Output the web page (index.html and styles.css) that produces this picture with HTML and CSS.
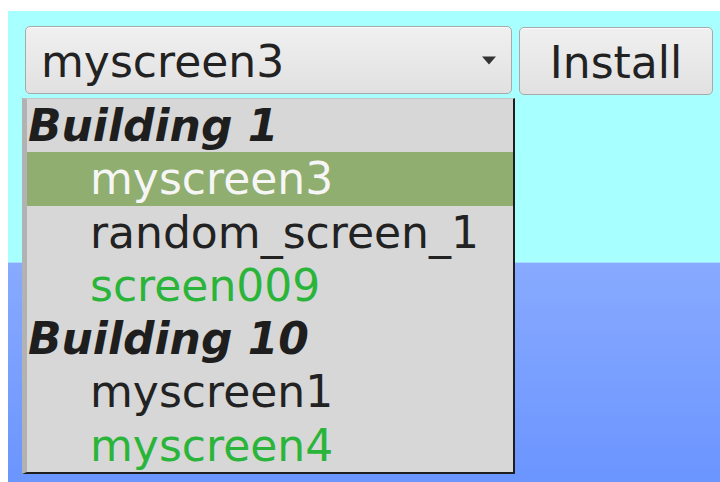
FILE: index.html
```html
<!DOCTYPE html>
<html lang="en">
<head>
<meta charset="utf-8">
<title>Screen installer</title>
<link rel="stylesheet" href="styles.css">
</head>
<body>
<div class="stage">
  <div class="top">
    <div class="toolbar">
      <div class="combo">
        <span class="combo-value">myscreen3</span>
        <svg class="arrow" width="16" height="9" viewBox="0 0 16 9"><path d="M1 0.5h14L8 8.5z" fill="#333"/></svg>
      </div>
      <button class="btn">Install</button>
    </div>
  </div>
  <div class="bottom"></div>

  <ul class="popup">
    <li class="group">Building 1</li>
    <li class="item selected">myscreen3</li>
    <li class="item">random_screen_1</li>
    <li class="item online">screen009</li>
    <li class="group">Building 10</li>
    <li class="item">myscreen1</li>
    <li class="item online">myscreen4</li>
  </ul>
</div>
</body>
</html>
```

FILE: styles.css
```css
html, body {
  margin: 0;
  padding: 0;
  background: #ffffff;
}

body {
  font-family: "DejaVu Sans", "Liberation Sans", sans-serif;
  color: #222222;
}

.stage {
  position: relative;
  margin: 11px 0 0 8px;
  height: 471px;
  display: flex;
  flex-direction: column;
}

.top {
  height: 252px;
  background: #a8ffff;
  border-bottom: 1px solid #a6ddff;
  box-sizing: border-box;
}

.bottom {
  flex: 1;
  background: linear-gradient(to bottom, #88aaff, #6b95ff);
}

.toolbar {
  display: flex;
  gap: 7px;
  padding: 15px 0 0 17px;
}

.combo {
  box-sizing: border-box;
  width: 487px;
  height: 68px;
  display: flex;
  align-items: center;
  justify-content: space-between;
  padding: 0 12px 0 15px;
  border: 1px solid #a9a9a9;
  border-radius: 5px;
  background: linear-gradient(to bottom, #f0f0f0, #e1e1e1);
  box-shadow: inset 0 1px 0 #fbfbfb;
  font-size: 44px;
  color: #222222;
}

.combo-value {
  line-height: 1;
  padding-top: 3px;
}

.arrow {
  display: block;
  margin-right: 2px;
}

.btn {
  box-sizing: border-box;
  width: 194px;
  height: 68px;
  margin-top: 1px;
  border: 1px solid #a9a9a9;
  border-radius: 5px;
  background: linear-gradient(to bottom, #f0f0f0, #e1e1e1);
  box-shadow: inset 0 1px 0 #fbfbfb;
  font-family: "DejaVu Sans", sans-serif;
  font-size: 44px;
  color: #222222;
  padding: 3px 0 0;
  line-height: 1;
}

/* dropdown list of the combo box, floating over the page */
.popup {
  position: absolute;
  left: 14px;
  top: 87px;
  width: 493px;
  margin: 0;
  padding: 0;
  list-style: none;
  box-sizing: border-box;
  background: #d7d7d7;
  border-top: 1px solid #c4c4c4;
  border-left: 5px solid #b2b2b2;
  border-right: 2px solid #1e1e1e;
  border-bottom: 2px solid #1e1e1e;
  font-size: 44px;
}

.popup li {
  height: 53.3px;
  line-height: 53.3px;
  white-space: nowrap;
}

.group {
  font-weight: bold;
  font-style: italic;
  padding-left: 1px;
  color: #1e1e1e;
}

.item {
  padding-left: 63px;
  color: #222222;
}

.item.online {
  color: #2ab53a;
}

.item.selected {
  background: #8fae6f;
  color: #f6f6f6;
}
```
